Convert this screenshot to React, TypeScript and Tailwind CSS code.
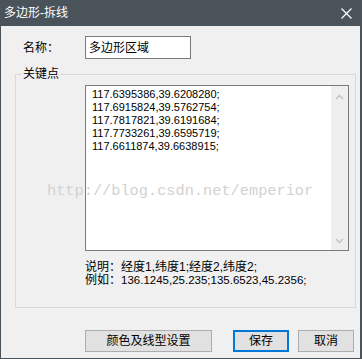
const lines = [
  "117.6395386,39.6208280;",
  "117.6915824,39.5762754;",
  "117.7817821,39.6191684;",
  "117.7733261,39.6595719;",
  "117.6611874,39.6638915;",
];

function Chevron({ up }: { up?: boolean }) {
  return (
    <svg width="9" height="6" viewBox="0 0 9 6" className="block">
      <path
        d={up ? "M1 5 L4.5 1.5 L8 5" : "M1 1 L4.5 4.5 L8 1"}
        fill="none"
        stroke="#c2c2c2"
        strokeWidth="1.5"
      />
    </svg>
  );
}

export default function App() {
  return (
    <div className="relative w-[362px] h-[359px] bg-[#4b535a] flex flex-col text-[12px] text-black font-['Liberation_Sans','Noto_Sans_CJK_SC',sans-serif]">
      {/* Title bar */}
      <div className="h-[26px] flex items-center justify-between pl-[4px] pr-[10px] text-white leading-[14px]">
        <span>多边形-拆线</span>
        <svg width="11" height="11" viewBox="0 0 11 11" className="block">
          <path d="M0.5 0.5 L10.5 10.5 M10.5 0.5 L0.5 10.5" stroke="#ffffff" strokeWidth="1.2" />
        </svg>
      </div>

      {/* Body */}
      <div className="flex-1 ml-px mr-[2px] mb-px bg-[#f0f0f0] flex flex-col">
        {/* Name row */}
        <div className="flex items-center pt-[10px] pl-[22px]">
          <span className="w-[62px] leading-[14px]">名称：</span>
          <div className="w-[106px] h-[23px] border border-[#7a7a7a] bg-white pl-[3px] flex items-center leading-[14px]">
            多边形区域
          </div>
        </div>

        {/* Group box */}
        <fieldset className="ml-[14px] w-[341px] mt-[8px] border border-[#d9d9d9] pb-[20px]">
          <legend className="ml-[6px] px-px leading-[14px]">关键点</legend>
          <div className="pl-[69px]">
            <div className="mt-[4px] w-[264px] h-[166px] border border-[#7a7a7a] bg-white flex">
              <div className="flex-1 pl-[6px] pt-[2px] text-[11px] leading-[13px] font-['Liberation_Sans',sans-serif]">
                {lines.map((l) => (
                  <div key={l}>{l}</div>
                ))}
              </div>
              <div className="w-[17px] bg-[#efefef] flex flex-col items-center justify-between pt-[8px] pb-[6px]">
                <Chevron up />
                <Chevron />
              </div>
            </div>
            <div className="mt-[10px] leading-[13px]">
              <div>说明：经度1,纬度1;经度2,纬度2;</div>
              <div>
                例如：<span className="text-[11.5px]">136.1245,25.235;135.6523,45.2356;</span>
              </div>
            </div>
          </div>
        </fieldset>

        {/* Buttons */}
        <div className="flex mt-[22px] pl-[84px] leading-[14px]">
          <button className="w-[127px] h-[22px] bg-[#e1e1e1] border border-[#adadad] flex items-center justify-center">
            颜色及线型设置
          </button>
          <button className="ml-[21px] w-[56px] h-[22px] bg-[#e1e1e1] border-2 border-[#0078d7] flex items-center justify-center">
            保存
          </button>
          <button className="ml-[9px] w-[56px] h-[22px] bg-[#e1e1e1] border border-[#adadad] flex items-center justify-center">
            取消
          </button>
        </div>
      </div>

      {/* Watermark */}
      <div className="absolute left-[47px] top-[181px] text-[15.3px] leading-[20px] text-[#d2d2d2] font-['Liberation_Mono',monospace] pointer-events-none whitespace-nowrap">
        http://blog.csdn.net/emperior
      </div>
    </div>
  );
}
